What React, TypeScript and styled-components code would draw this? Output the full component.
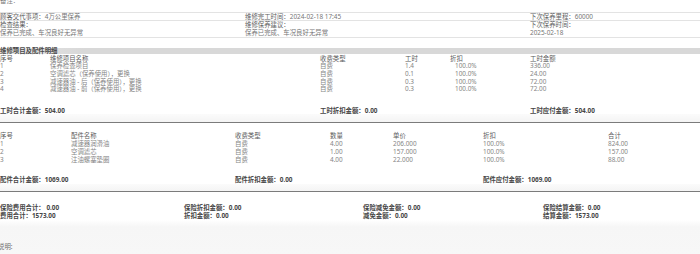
import React, { FC } from "react";
import styled, { createGlobalStyle } from "styled-components";

const GlobalStyle = createGlobalStyle`
  html, body {
    margin: 0;
    padding: 0;
    background: #ffffff;
  }
  body {
    font-family: "Noto Sans", "Noto Sans CJK SC", sans-serif;
    font-size: 6.4px;
    color: #707070;
  }
`;

const Page = styled.div`
  width: 700px;
  height: 254px;
  overflow: hidden;
  display: flex;
  flex-direction: column;
`;

const CutLine = styled.div`
  height: 4px;
  overflow: hidden;
  display: flex;
  align-items: flex-end;
  line-height: 7px;
  color: #808080;
`;

const InfoGrid = styled.div`
  margin-top: 7.5px;
  display: grid;
  grid-template-columns: 245px 285px 1fr;
  border-top: 1px solid #e3e3e3;
`;

const InfoCell = styled.div`
  line-height: 7.7px;
  border-bottom: 1px solid #e3e3e3;
  color: #767676;
  white-space: nowrap;
`;

const InfoLabel = styled.span`
  color: #5e5e5e;
`;

const InfoBlockLabel = styled.div`
  color: #5e5e5e;
`;

const InfoValue = styled.div`
  color: #767676;
`;

const SectionTitle = styled.div`
  margin-top: 9.9px;
  height: 6.6px;
  line-height: 6.6px;
  background: linear-gradient(to right, #e8e8e8, #d8d8d8 12%, #d8d8d8);
  font-weight: bold;
  color: #4a4a4a;
`;

interface GridProps {
  $cols: string;
  $lh: number;
  $top: number;
}

const Grid = styled.div<GridProps>`
  margin-top: ${(p) => p.$top}px;
  display: grid;
  grid-template-columns: ${(p) => p.$cols};
  line-height: ${(p) => p.$lh}px;
  white-space: nowrap;
`;

const HeadCell = styled.div`
  color: #5a5a5a;
`;

const Cell = styled.div<{ $indent?: number }>`
  color: #858585;
  padding-left: ${(p) => p.$indent || 0}px;
`;

const Total = styled.div`
  font-weight: bold;
  color: #454545;
`;

const Band = styled.div<{ $h: number }>`
  height: ${(p) => p.$h}px;
  background: linear-gradient(#fbfbfb, #f4f4f4);
  border-bottom: 1.6px solid #7b7b7b;
`;

const Footer = styled.div`
  flex: 1;
  padding-top: 23px;
  line-height: 7.6px;
  background: linear-gradient(#ffffff, #f6f6f6 20%, #f7f7f7);
  color: #707070;
  text-indent: -2px;
`;

const laborRows = [
  ["1", "保养检查项目", "自费", "1.4", "100.0%", "336.00"],
  ["2", "空调滤芯（保养使用），更换", "自费", "0.1", "100.0%", "24.00"],
  ["3", "减速器油 - 后（保养使用），更换", "自费", "0.3", "100.0%", "72.00"],
  ["4", "减速器油 - 前（保养使用），更换", "自费", "0.3", "100.0%", "72.00"],
];

const partRows = [
  ["1", "减速器润滑油", "自费", "4.00", "206.000", "100.0%", "824.00"],
  ["2", "空调滤芯", "自费", "1.00", "157.000", "100.0%", "157.00"],
  ["3", "注油螺塞垫圈", "自费", "4.00", "22.000", "100.0%", "88.00"],
];

const LABOR_COLS = "50px 270px 85px 45px 80px 1fr";
const PART_COLS = "71px 164px 95px 63px 90px 125px 1fr";

const App: FC = () => {
  return (
    <Page>
      <GlobalStyle />
      <CutLine>
        <span>备注：</span>
      </CutLine>

      <InfoGrid>
        <InfoCell>
          <InfoLabel>顾客交代事项：</InfoLabel>4万公里保养
        </InfoCell>
        <InfoCell>
          <InfoLabel>维修完工时间：</InfoLabel>2024-02-18 17:45
        </InfoCell>
        <InfoCell>
          <InfoLabel>下次保养里程：</InfoLabel>60000
        </InfoCell>
        <InfoCell>
          <InfoBlockLabel>检查结果：</InfoBlockLabel>
          <InfoValue>保养已完成、车况良好无异常</InfoValue>
        </InfoCell>
        <InfoCell>
          <InfoBlockLabel>维修保养建议：</InfoBlockLabel>
          <InfoValue>保养已完成、车况良好无异常</InfoValue>
        </InfoCell>
        <InfoCell>
          <InfoBlockLabel>下次保养时间：</InfoBlockLabel>
          <InfoValue>2025-02-18</InfoValue>
        </InfoCell>
      </InfoGrid>

      <SectionTitle>维修项目及配件明细</SectionTitle>

      <Grid $cols={LABOR_COLS} $lh={7.6} $top={0.8}>
        <HeadCell>序号</HeadCell>
        <HeadCell>维修项目名称</HeadCell>
        <HeadCell>收费类型</HeadCell>
        <HeadCell>工时</HeadCell>
        <HeadCell>折扣</HeadCell>
        <HeadCell>工时金额</HeadCell>
        {laborRows.map((row) =>
          row.map((value, i) => (
            <Cell key={row[0] + "-" + i} $indent={i === 4 ? 5 : 0}>
              {value}
            </Cell>
          ))
        )}
      </Grid>

      <Grid $cols="320px 210px 1fr" $lh={7.6} $top={14}>
        <Total>工时合计金额：504.00</Total>
        <Total>工时折扣金额：0.00</Total>
        <Total>工时应付金额：504.00</Total>
      </Grid>
      <Band $h={7.6} />

      <Grid $cols={PART_COLS} $lh={8} $top={8.6}>
        <HeadCell>序号</HeadCell>
        <HeadCell>配件名称</HeadCell>
        <HeadCell>收费类型</HeadCell>
        <HeadCell>数量</HeadCell>
        <HeadCell>单价</HeadCell>
        <HeadCell>折扣</HeadCell>
        <HeadCell>合计</HeadCell>
        {partRows.map((row) =>
          row.map((value, i) => <Cell key={row[0] + "-" + i}>{value}</Cell>)
        )}
      </Grid>

      <Grid $cols="235px 248px 1fr" $lh={7.6} $top={12.6}>
        <Total>配件合计金额：1069.00</Total>
        <Total>配件折扣金额：0.00</Total>
        <Total>配件应付金额：1069.00</Total>
      </Grid>
      <Band $h={7.6} />

      <Grid $cols="184px 179px 180px 1fr" $lh={7.8} $top={11.6}>
        <Total>保险费用合计： 0.00</Total>
        <Total>保险折扣金额：0.00</Total>
        <Total>保险减免金额：0.00</Total>
        <Total>保险结算金额：0.00</Total>
        <Total>费用合计：1573.00</Total>
        <Total>折扣金额：0.00</Total>
        <Total>减免金额：0.00</Total>
        <Total>结算金额：1573.00</Total>
      </Grid>

      <Footer>说明:</Footer>
    </Page>
  );
};

export default App;
